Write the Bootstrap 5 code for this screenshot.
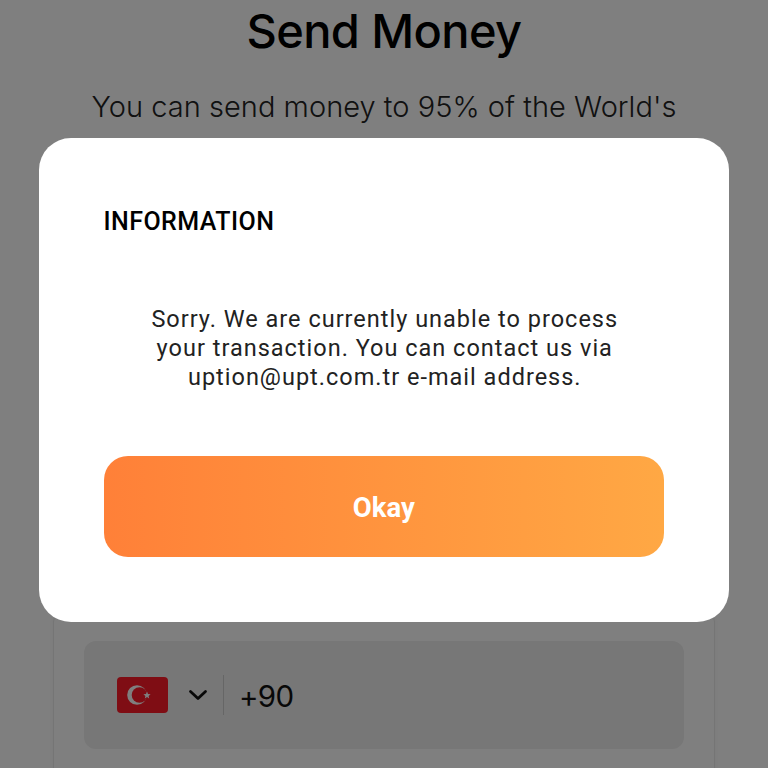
<!DOCTYPE html>
<html lang="en">
<head>
<meta charset="utf-8">
<title>Send Money</title>
<link href="https://cdn.jsdelivr.net/npm/bootstrap@5.3.0/dist/css/bootstrap.min.css" rel="stylesheet">
<style>
html,body{height:768px;overflow:hidden;background:#fff;}
.page-wrap{height:768px;overflow:hidden;text-align:center;}
.page-title{font:500 47px/1 Inter,sans-serif;letter-spacing:-.6px;color:#000;padding-top:7px;margin:0;height:80px;}
.page-sub{font:300 29px/1 Inter,sans-serif;letter-spacing:.03px;color:#222;margin:0;padding-top:12px;height:130px;white-space:nowrap;}
.form-panel{width:662px;height:600px;margin:398px auto 0;border:1px solid #eaeaea;border-radius:14px;background:#fff;padding:32px 30px;box-shadow:0 0 6px rgba(0,0,0,.04);}
.phone-box{height:108px;background:#eeeeee;border-radius:12px;padding-left:33px;}
.flag-box{width:51px;height:36px;display:block;}
.chev{width:20px;height:12px;margin-left:20px;}
.vline{width:1px;height:40px;background:#ccc;margin:0 15px 0 15px;}
.phone-code{font:400 29.5px/1 Inter,sans-serif;color:#111;letter-spacing:-.7px;padding-top:3px;}
.dim-layer{position:fixed;inset:0;background:rgba(0,0,0,.5);z-index:10;}
.info-dialog{position:fixed;left:38.5px;top:138px;width:690.5px;height:483.5px;background:#fff;border-radius:32px;z-index:20;padding:69px 65px 0;}
.info-title{font:500 25px/30px Roboto,sans-serif;color:#000;margin:0;letter-spacing:.45px;}
.info-text{font:400 23.5px/29px Roboto,sans-serif;letter-spacing:1px;color:#222;text-align:center;margin:68px 0 0;padding-left:2px;}
.okay-btn{display:block;width:100%;height:101px;margin-top:64px;padding-top:9px;border:0;border-radius:24px;background:linear-gradient(90deg,#ff8038,#ffa844);color:#fff;font:700 27.5px/1 Roboto,sans-serif;}
.okay-btn:hover{color:#fff;}
</style>
</head>
<body>
<div class="page-wrap">
  <h1 class="page-title">Send Money</h1>
  <p class="page-sub">You can send money to 95% of the World's</p>
  <div class="form-panel">
    <div class="phone-box d-flex align-items-center">
      <svg class="flag-box" viewBox="0 0 51 36" aria-hidden="true">
        <rect width="51" height="36" rx="4" fill="#ff1a28"/>
        <circle cx="20" cy="18" r="9.8" fill="#fff"/>
        <circle cx="22.5" cy="18" r="7.8" fill="#ff1a28"/>
        <polygon fill="#fff" points="30,14.6 31,17 33.6,17.2 31.6,18.9 32.2,21.4 30,20 27.8,21.4 28.4,18.9 26.4,17.2 29,17"/>
      </svg>
      <svg class="chev" viewBox="0 0 20 12" aria-hidden="true"><path d="M2.5 2.5 10 9.5l7.5-7" fill="none" stroke="#111" stroke-width="2.8" stroke-linecap="round" stroke-linejoin="round"/></svg>
      <span class="vline"></span>
      <span class="phone-code">+90</span>
    </div>
  </div>
</div>
<div class="dim-layer"></div>
<div class="info-dialog">
  <h2 class="info-title">INFORMATION</h2>
  <p class="info-text">Sorry. We are currently unable to process<br>your transaction. You can contact us via<br>uption@upt.com.tr e-mail address.</p>
  <button type="button" class="btn okay-btn">Okay</button>
</div>
<script src="https://cdn.jsdelivr.net/npm/bootstrap@5.3.0/dist/js/bootstrap.bundle.min.js"></script>
</body>
</html>
